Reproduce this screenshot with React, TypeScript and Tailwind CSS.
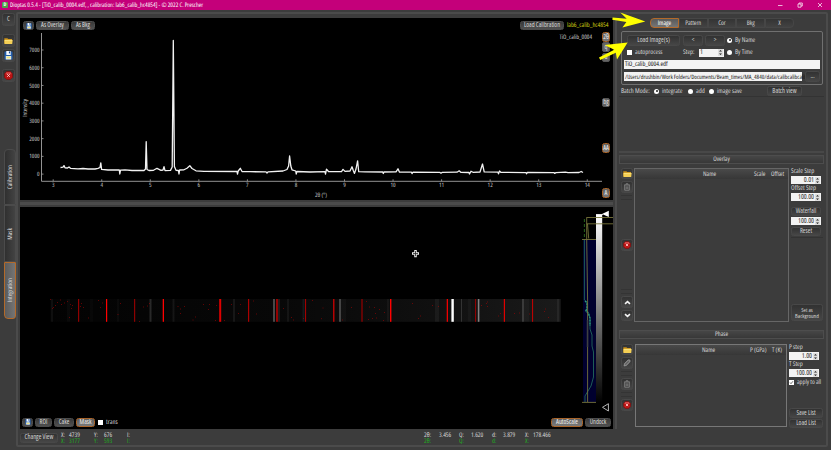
import type { ReactNode } from 'react';

const btn =
  'flex shrink-0 items-center justify-center whitespace-nowrap rounded-[2.5px] border border-[#484848] bg-linear-to-b from-[#323232] to-[#464646] text-[#d4d4d4]';
const plotBtn =
  'flex shrink-0 items-center justify-center whitespace-nowrap rounded-[2.5px] border border-[#4c4c4c] bg-linear-to-b from-[#383838] to-[#505050] text-[#dedede]';
const activeBtn =
  'flex shrink-0 items-center justify-center whitespace-nowrap rounded-[2.5px] border border-[#a8642a] bg-linear-to-b from-[#606060] to-[#7a7a7a] text-[#f0f0f0]';

function Button({ className = '', active = false, plot = false, children }: { className?: string; active?: boolean; plot?: boolean; children?: ReactNode }) {
  return <button className={`${active ? activeBtn : plot ? plotBtn : btn} ${className}`}>{children}</button>;
}

function SideButton({ className = '', children }: { className?: string; children?: ReactNode }) {
  return (
    <button className={`flex shrink-0 items-center justify-center rounded-[2px] border border-[#555] bg-[#646464] text-[#e2e2e2] ${className}`}>
      {children}
    </button>
  );
}

function Folder() {
  return (
    <svg width="9" height="8" viewBox="0 0 9 8" className="shrink-0">
      <path d="M0.3 1.2 H3.4 L4.2 2 H8 V6.8 H0.3Z" fill="#c98f16" />
      <path d="M0.3 2.9 H8.7 L8.2 6.9 H0.6Z" fill="#f4cf55" />
      <path d="M1 3.3 H8" stroke="#fff0a0" strokeWidth="0.6" />
    </svg>
  );
}

function Save({ size = 8 }: { size?: number }) {
  return (
    <svg width={size} height={size} viewBox="0 0 9 9" className="shrink-0">
      <rect x="0.5" y="0.5" width="8" height="8" rx="0.6" fill="#245fae" />
      <rect x="2.3" y="0" width="4.4" height="4" fill="#f4f8ff" />
      <rect x="4.9" y="0.4" width="1.2" height="2" fill="#1c4c92" />
      <rect x="1.8" y="5" width="5.4" height="3.5" fill="#e8eef4" />
      <rect x="2.4" y="5.6" width="4.2" height="1.8" fill="#eee47e" />
    </svg>
  );
}

function Stop({ size = 8 }: { size?: number }) {
  return (
    <svg width={size} height={size} viewBox="0 0 9 9" className="shrink-0">
      <path d="M2.7 0.5 H6.3 L8.5 2.7 V6.3 L6.3 8.5 H2.7 L0.5 6.3 V2.7Z" fill="#b81414" stroke="#7d0808" strokeWidth="0.6" />
      <path d="M2.4 1.2 H6.6 L7.6 3.2 H1.4Z" fill="#e86b6b" opacity="0.6" />
      <path d="M3.2 3.2 L5.8 5.8 M5.8 3.2 L3.2 5.8" stroke="#ffd8d8" strokeWidth="0.9" />
    </svg>
  );
}

function Trash() {
  return (
    <svg width="8" height="8" viewBox="0 0 8 8" className="shrink-0" fill="none" stroke="#8c8c8c" strokeWidth="0.8">
      <path d="M1 2 H7 M3 1.8 V0.8 H5 V1.8 M1.7 2.2 V7.2 H6.3 V2.2 M3.2 3.3 V6 M4.8 3.3 V6" />
    </svg>
  );
}

function Pencil() {
  return (
    <svg width="8" height="8" viewBox="0 0 8 8" className="shrink-0">
      <path d="M1 7 L1.6 4.4 L5 1 Q6.3 0.4 7 1.2 Q7.5 2 6.8 3 L3.4 6.4Z" fill="#777" stroke="#a4a4a4" strokeWidth="0.6" />
      <path d="M2.3 5.5 L5.8 2.1" stroke="#444" strokeWidth="0.6" />
    </svg>
  );
}

function Chevron({ up = false }: { up?: boolean }) {
  return (
    <svg width="7" height="5" viewBox="0 0 7 5" className="shrink-0">
      <path d={up ? 'M1 3.8 L3.5 1.6 L6 3.8' : 'M1 1.2 L3.5 3.4 L6 1.2'} fill="none" stroke="#f2f2f2" strokeWidth="1.6" />
    </svg>
  );
}

function Radio({ on = false }: { on?: boolean }) {
  return (
    <span className="flex size-[5px] shrink-0 items-center justify-center rounded-full bg-white">
      {on && <span className="size-[2px] rounded-full bg-[#222]" />}
    </span>
  );
}

function Spin({ value, className = '' }: { value: string; className?: string }) {
  return (
    <div className={`flex shrink-0 items-center bg-[#f3f3f3] text-[6.8px] text-[#222] ${className}`}>
      <span className="flex-1 px-px">{value}</span>
      <svg width="5" height="7" viewBox="0 0 5 7" className="mr-px shrink-0 bg-[#dedede]">
        <path d="M1 2.6 L2.5 0.9 L4 2.6Z M1 4.4 L2.5 6.1 L4 4.4Z" fill="#222" />
      </svg>
    </div>
  );
}

function Section({ title }: { title: string }) {
  return (
    <div className="flex h-[9px] items-center justify-center border border-[#4d4d4d] bg-linear-to-b from-[#464646] to-[#383838]">
      {title}
    </div>
  );
}

function Rules({ className = '' }: { className?: string }) {
  return <div className={`h-[5px] w-[11px] border-y border-[#343434] ${className}`} />;
}

const yTicks = [7000, 6000, 5000, 4000, 3000, 2000, 1000, 0];
const xTicks = [3, 4, 5, 6, 7, 8, 9, 10, 11, 12, 13, 14];

const trace =
  'M60.5 167.5 L63 167.2 L64 165.6 L65 167.8 L67.5 168 L69 167 L70.5 168.3 L78 168.8 L83 168.5 L88 169 L95 169 L98 168.4 L100 167.5 L100.8 162.8 L101.6 169.3 L108 170 L119.3 170 L119.8 174 L120.5 170.2 L125 169.8 L132 170.5 L144 170.5 L145.5 169 L146.2 141.7 L147 169.5 L149 170.5 L153.5 170.3 L157 168.3 L161 170.3 L163 170 L164 166.7 L165 170.6 L170.5 170.4 L172.2 167 L173.3 40.5 L174.4 166.5 L176 170.3 L178.4 170.5 L179 174 L179.6 170 L184 169.8 L187 168.2 L189.8 165.7 L192 168.5 L196 170.8 L204 171.4 L237 171.5 L237.5 174 L238.2 171 L240.3 168.3 L242 171.5 L250 171.7 L266 171.9 L267 173 L268 171.8 L283 171 L287 169.5 L288.6 166 L289.6 156 L290.8 166 L292 169.8 L295.7 171 L296.2 174 L296.9 171.5 L310 172 L325 171.7 L325.5 174 L326.5 169.2 L328.5 171.5 L341.5 171.6 L343 169.4 L345 171.4 L350 171 L352 166.8 L353.3 170.5 L354.5 173.4 L356 169 L357.6 160.8 L358.7 171.7 L365 171.8 L382.8 172 L383.3 173.5 L384 172 L396 171.9 L398 168.8 L399.5 172.2 L411.5 172.2 L412 173.6 L413 172.2 L440 172.4 L441 173.2 L442 172.4 L457 172.2 L459.2 170.8 L461 172.4 L469 172.5 L469.5 174 L471 171.2 L473 172.3 L480 172 L482.5 164 L484.2 171.8 L498 172.2 L498.5 173.8 L499.5 171 L501 172.4 L526 172.6 L526.6 173.8 L527.3 172.5 L554 172.6 L554.6 173.4 L556 172.6 L565.5 172.1 L568 172.7 L579 172.5 L581.2 171.5 L583 172.5';

function PatternPlot() {
  return (
    <svg width="580" height="168" viewBox="20 32 580 168" className="shrink-0 overflow-visible" fill="#c9c9c9" fontSize="6">
      <path d="M41.5 33 V181.3 H602" fill="none" stroke="#a4a4a4" strokeWidth="0.9" />
      {yTicks.map((v) => (
        <g key={v}>
          <path d={`M41.5 ${174.1 - v * 0.01773} h2`} stroke="#a4a4a4" strokeWidth="0.8" />
          <text x="39.5" y={176.2 - v * 0.01773} textAnchor="end">{v}</text>
        </g>
      ))}
      {xTicks.map((v) => (
        <g key={v}>
          <path d={`M${53.2 + (v - 3) * 48.55} 181.3 v-2`} stroke="#a4a4a4" strokeWidth="0.8" />
          <text x={53.2 + (v - 3) * 48.55} y="187" textAnchor="middle">{v}</text>
        </g>
      ))}
      <text x="321" y="197" textAnchor="middle">2θ (°)</text>
      <text transform="translate(27 108) rotate(-90)" textAnchor="middle">Intensity</text>
      <path d={trace} fill="none" stroke="#f2f2f2" strokeWidth="1.3" strokeLinejoin="round" />
      <text x="559.5" y="39.3" fontSize="6.1" textLength="32.5">TiO_calib_0004</text>
    </svg>
  );
}

const bands: [number, number, string, number][] = [
  [51, 2, '#aaa', 0.08], [67, 3, '#aaa', 0.04], [90, 3, '#aaa', 0.03], [117, 2, '#aaa', 0.04], [149.5, 2, '#aaa', 0.22], [172.5, 2, '#aaa', 0.1],
  [233, 2, '#aaa', 0.1], [273, 2, '#bbb', 0.36], [278, 2, '#aaa', 0.13], [287, 2, '#aaa', 0.08], [302.5, 2, '#67809a', 0.13], [339, 2, '#ccc', 0.3], [341, 5, '#aaa', 0.04],
  [387, 2, '#aaa', 0.06], [435, 4, '#aaa', 0.08], [451.4, 2.4, '#fff', 1], [461, 1, '#aaa', 0.22], [468, 3, '#aaa', 0.04], [477.8, 1.6, '#ddd', 0.55], [522, 2, '#bbb', 0.22], [524, 5, '#aaa', 0.04],
  [557, 2, '#bbb', 0.08], [78, 1.2, '#b30000', 0.8], [106, 1.2, '#ff0000', 1], [134, 1.2, '#b00000', 0.8], [162.7, 1.3, '#ff0000', 1],
  [219.2, 2, '#dd0000', 1], [248, 1.2, '#bd0000', 0.9], [276, 2, '#ad0000', 0.85], [305, 1.1, '#b40000', 0.9], [333.2, 1.2, '#e00000', 1],
  [361.2, 1.6, '#900000', 0.8], [390, 1.4, '#ff0000', 1], [446.7, 1.3, '#f00000', 1], [475, 1.1, '#9c0000', 0.9], [503.8, 1.2, '#e00000', 1], [532, 1.1, '#cc0000', 0.9],
];

const specks = [
  [50, 299], [53, 307], [55, 305], [57, 302], [60, 299.5], [61, 304], [64, 302.5], [52, 308], [67, 301], [72, 305], [71, 308], [70, 304], [69, 317], [81, 303], [80, 306], [83, 307], [88, 317.5], [98, 300], [100, 307], [102, 302.5],
  [120, 303], [117.5, 314], [139, 321], [143, 306.5], [147, 305.5], [149, 303], [177.5, 306], [180, 308.5], [184, 306], [180, 313], [192.5, 319.5], [195, 316.5], [209, 304], [203, 304], [208, 309], [216, 305], [215, 320], [224, 320],
  [231, 304], [238, 313], [240, 304], [253, 300.5], [256, 313.5], [283, 308], [291, 317], [293, 319.5], [303, 318], [312, 300], [321, 318.2], [322.5, 307.5], [351, 307], [342, 319.5], [366, 301], [369, 306.5], [374, 307], [375, 313],
  [368, 319], [372, 318], [376, 317.5], [379, 309], [384, 312], [383, 320], [412, 303], [418, 318], [420, 315.5], [432, 305], [438, 306], [481, 305], [486, 303], [487, 306], [487, 301.5], [498, 315.5], [500, 313], [514, 313], [519, 312.5], [529, 313.5], [545, 308.5], [544, 311], [548, 317],
];

function DetectorImage() {
  return (
    <svg width="593" height="207" viewBox="20 207 593 207" className="block shrink-0">
      <defs>
        <linearGradient id="strip">
          <stop offset="0" stopColor="#030303" />
          <stop offset="0.45" stopColor="#080808" />
          <stop offset="0.75" stopColor="#101010" />
          <stop offset="1" stopColor="#1a1a1a" />
        </linearGradient>
        <linearGradient id="levels" x1="0" x2="0" y1="0" y2="1">
          <stop offset="0" stopColor="#fff" />
          <stop offset="1" stopColor="#000" />
        </linearGradient>
      </defs>
      <rect x="50" y="299" width="510.7" height="22.8" fill="url(#strip)" />
      {bands.map(([x, w, c, o], i) => <rect key={i} x={x} y="299" width={w} height="22.8" fill={c} opacity={o} />)}
      {specks.map(([x, y], i) => <rect key={i} x={x} y={y} width="1" height="1" fill="#c00000" opacity="0.5" />)}
      <path d="M415.5 250 V257.2 M412 253.6 H419" stroke="#eee" strokeWidth="2.5" />
      <path d="M415.5 251 V256.2 M413 253.6 H418" stroke="#333" strokeWidth="0.9" />
      <rect x="583" y="239" width="13" height="163.5" fill="#00002f" />
      <rect x="596" y="214.5" width="6.2" height="188.5" fill="url(#levels)" />
      <path d="M596 214.5 H603" stroke="#fff" strokeWidth="0.8" />
      <path d="M584.4 239 V300 L587 302 V308 L585.5 311 L588 313 L590 318 V329 L592 335 V346 L593.5 352 V377 L591 386 L588 391 L585 396 V402" fill="none" stroke="#20685c" strokeWidth="0.9" />
      <path d="M585 301 L587 303 V308 L586 311 L588.5 313 L590 318 V326" fill="none" stroke="#2c9a80" strokeWidth="1.3" strokeDasharray="2 1" />
      <path d="M584.4 219 V239" stroke="#2f7020" strokeWidth="0.9" strokeDasharray="3 2" />
      <path d="M586.7 217.5 V239 L587.6 300 V402 M586.5 217.5 H613 M586.5 223.8 H613 M587.5 224 L588.7 238.5 M582 239.5 H596 M582 402.4 H596" fill="none" stroke="#77743a" strokeWidth="0.9" />
      <path d="M587.5 320 V347" stroke="#3f4040" strokeWidth="1.5" />
      <path d="M602 214 L608.8 210.8 V217Z" fill="#fff" />
      <path d="M602.5 407.3 L608.4 403.7 V411Z" fill="none" stroke="#c8c8c8" strokeWidth="0.9" />
    </svg>
  );
}

function Sidebar() {
  return (
    <aside className="flex w-4 shrink-0 flex-col pt-[3px] pl-[2px]">
      <Button className="h-[13px] w-[13px]">C</Button>
      <Button className="mt-2 h-[13px] w-[13px]"><Folder /></Button>
      <Button className="mt-[2px] h-[13px] w-[13px]"><Save size={9} /></Button>
      <Button className="mt-[7px] h-[13px] w-[13px]"><Stop size={9} /></Button>
      <nav className="mt-[67px] ml-[2px] flex flex-col">
        {['Calibration', 'Mask', 'Integration'].map((t, i) => (
          <div
            key={t}
            className={`flex w-3 items-center justify-center border ${i === 0 ? 'h-14' : 'h-[57px]'} ${i === 2 ? 'rounded-bl-[4px] rounded-br-[3px] border-[#b36a2a] bg-linear-to-r from-[#5c5c5c] to-[#747474]' : 'border-[#4b4b4b] bg-linear-to-r from-[#303030] to-[#434343]'} ${i === 0 ? 'rounded-t-[4px]' : ''}`}
          >
            <span className="rotate-180 text-[6.4px] [writing-mode:vertical-rl]">{t}</span>
          </div>
        ))}
      </nav>
    </aside>
  );
}

function PatternPanel() {
  return (
    <section className="flex h-[182px] flex-col bg-black">
      <div className="flex h-[14px] items-center pt-px pr-[3px] pl-[3px]">
        <Button plot className="h-[9px] w-[11px]"><Save size={6} /></Button>
        <Button plot className="ml-[2px] h-[9px] w-[33px]">As Overlay</Button>
        <Button plot className="ml-[2px] h-[9px] w-6">As Bkg</Button>
        <Button plot className="ml-auto h-[9px] w-[44px]">Load Calibration</Button>
        <span className="ml-[3px] w-[43px] text-[6.4px] whitespace-nowrap text-[#d2d213]">lab6_calib_hc4854</span>
      </div>
      <div className="flex">
        <PatternPlot />
        <div className="ml-[2px] flex w-[8px] flex-col">
          <Button active className="h-[10px]">2θ</Button>
          <SideButton className="h-[10px]">q</SideButton>
          <SideButton className="mt-px h-[9px]">d</SideButton>
          <SideButton className="mt-[36px] h-[9px]">bg</SideButton>
          <Button active className="mt-[36px] h-[10px]">AA</Button>
          <Button active className="mt-[35px] h-[10px]">A</Button>
        </div>
      </div>
    </section>
  );
}

function ImagePanel() {
  return (
    <section className="flex h-[222px] flex-col bg-black">
      <DetectorImage />
      <div className="flex h-[15px] items-start px-[2px] pt-[4px]">
        <Button plot className="h-[9px] w-[11px]"><Save size={6} /></Button>
        <Button plot className="ml-[2px] h-[9px] w-[17px]">ROI</Button>
        <Button plot className="ml-[2px] h-[9px] w-5">Cake</Button>
        <Button active className="ml-[2px] h-[9px] w-[19px]">Mask</Button>
        <span className="mt-[2px] ml-[3px] size-[5px] bg-white" />
        <span className="mt-[1px] ml-[3px] text-[6.7px]">trans</span>
        <Button active className="ml-auto h-[9px] w-8 text-[6.5px]">AutoScale</Button>
        <Button plot className="ml-[2px] h-[9px] w-[26px]">Undock</Button>
      </div>
    </section>
  );
}

function Readout({ cells, className = '' }: { cells: string[]; className?: string }) {
  return (
    <div className={`grid h-[6px] grid-cols-[8px_25px_10px_23px_297px_15px_20px_12px_21px_11px_22px_8px_30px] items-center text-[6.4px] leading-[6px] whitespace-nowrap ${className}`}>
      {cells.map((c, i) => <span key={i}>{c}</span>)}
    </div>
  );
}

function StatusBar() {
  return (
    <footer className="flex h-[18px] items-start">
      <Button className="mt-1 h-[10px] w-[38px] text-[6.6px]">Change View</Button>
      <div className="mt-[3px] ml-[3px] flex flex-col">
        <Readout cells={['X:', '4739', 'Y:', '676', 'I:', '2θ:', '3.456', 'Q:', '1.620', 'd:', '3.879', 'X:', '178.466']} />
        <Readout className="text-[#1fb01f]" cells={['X:', '3177', 'Y:', '593', 'I:', '2θ:', '', 'Q:', '', 'd:', '', 'X:', '']} />
      </div>
    </footer>
  );
}

function ImageControls() {
  return (
    <div className="mx-[2px] h-[128px]">
      <div className="ml-[31px] flex h-[10px] w-[144px]">
        {['Image', 'Pattern', 'Cor', 'Bkg', 'X'].map((t, i) => (
          <div
            key={t}
            className={`flex flex-1 items-center justify-center border ${i === 0 ? 'rounded-l-[4px] border-[#b36a2a] bg-linear-to-b from-[#5a5a5a] to-[#757575] text-white' : 'border-[#464646] bg-linear-to-b from-[#343434] to-[#424242]'} ${i === 4 ? 'rounded-r-[4px]' : ''}`}
          >
            {t}
          </div>
        ))}
      </div>
      <div className="mt-[3px] ml-[2px] h-[54px] w-[202px] rounded-[2px] border border-[#707070] px-[2px] pt-[3px]">
        <div className="flex h-[11px] items-center">
          <Button className="ml-[3px] h-[11px] w-[53px] text-[6.7px]">Load Image(s)</Button>
          <Button className="ml-[3px] h-[11px] w-5">&lt;</Button>
          <Button className="ml-[2px] h-[11px] w-5">&gt;</Button>
          <span className="-mt-px ml-[2px] flex items-center gap-[3px] text-[6.6px]"><Radio on />By Name</span>
        </div>
        <div className="mt-[2px] flex h-[9px] items-center text-[6.6px]">
          <span className="ml-[3px] size-[5px] bg-white" />
          <span className="ml-[3px] w-[48px]">autoprocess</span>
          <span className="w-4">Step:</span>
          <Spin value="1" className="h-2 w-[25px]" />
          <span className="ml-[3px] flex items-center gap-[3px]"><Radio />By Time</span>
        </div>
        <div className="mt-[3px] flex h-[9px] items-center bg-[#f3f3f3] pl-px text-[#111]">TiO_calib_0004.edf</div>
        <div className="mt-[2px] flex items-center gap-[3px]">
          <div className="flex h-[9px] w-[178px] items-center bg-[#f3f3f3] pl-px text-[6px] whitespace-nowrap text-[#111] [font-stretch:78%]">
            /Users/drushbin/Work Folders/Documents/Beam_times/MA_4840/data/calibcalibcalib
          </div>
          <Button className="h-[11px] w-[15px]">...</Button>
        </div>
      </div>
      <div className="mt-px flex h-[11px] items-center border-b border-[#333] pl-[2px] text-[6.6px] whitespace-nowrap">
        <span className="w-[33px]">Batch Mode:</span>
        <Radio on /><span className="ml-[3px] w-[26px]">integrate</span>
        <Radio /><span className="ml-[3px] w-[13px]">add</span>
        <Radio /><span className="ml-[3px] w-[50px]">image save</span>
        <Button className="h-[10px] w-[35px] text-[6.6px]">Batch view</Button>
      </div>
    </div>
  );
}

function OverlaySection() {
  return (
    <div className="mx-[2px] flex h-[177px] flex-col border-t-2 border-[#484848] pt-[2px]">
      <Section title="Overlay" />
      <div className="flex pt-1">
        <div className="flex w-[15px] flex-col items-start pl-[2px]">
          <Button className="h-[11px] w-[12px]"><Folder /></Button>
          <Button className="mt-[2px] h-[12px] w-[12px]"><Trash /></Button>
          <Rules className="mt-[2px]" />
          <Button className="mt-[39px] h-[12px] w-[12px]"><Stop /></Button>
          <Rules className="mt-[38px]" />
          <Button className="mt-[2px] h-[12px] w-[12px]"><Chevron up /></Button>
          <Button className="mt-[2px] h-[11px] w-[12px]"><Chevron /></Button>
        </div>
        <div className="h-[154px] w-[155px] border border-[#666]">
          <div className="grid h-[10px] grid-cols-[119px_17px_17px] items-center bg-linear-to-b from-[#494949] to-[#373737]">
            <span className="pl-[68px]">Name</span><span>Scale</span><span>Offset</span>
          </div>
        </div>
        <div className="ml-[2px] flex w-8 flex-col whitespace-nowrap">
          <span className="h-[8px] text-[6.7px]">Scale Step</span>
          <Spin value="0.01" className="h-2 w-[30px] text-right" />
          <span className="mt-[1px] h-[8px] text-[6.7px]">Offset Step</span>
          <Spin value="100.00" className="h-2 w-[30px] text-right" />
          <Button className="mt-[6px] h-[9px] w-[30px] text-[6.5px]">Waterfall</Button>
          <Spin value="100.00" className="mt-px h-2 w-[30px] text-right" />
          <Button className="mt-[2px] h-[9px] w-[30px] text-[6.5px]">Reset</Button>
          <div className="mt-px border-b border-[#333]" />
          <Button className="mt-[66px] h-[17px] w-8 text-center text-[5.8px] leading-[6px]">Set as<br />Background</Button>
        </div>
      </div>
    </div>
  );
}

function PhaseSection() {
  return (
    <div className="mx-[2px] flex flex-col pt-[2px]">
      <Section title="Phase" />
      <div className="flex pt-[5px]">
        <div className="flex w-4 flex-col items-start pl-[2px]">
          <Button className="h-[11px] w-[12px]"><Folder /></Button>
          <Button className="mt-[2px] h-[12px] w-[12px]"><Pencil /></Button>
          <Rules className="mt-[2px]" />
          <Button className="mt-[2px] h-[12px] w-[12px]"><Trash /></Button>
          <Rules className="mt-[2px]" />
          <Button className="mt-[2px] h-[12px] w-[12px]"><Stop /></Button>
        </div>
        <div className="h-[83px] w-[152px] border border-[#777]">
          <div className="grid h-[10px] grid-cols-[114px_22px_14px] items-center bg-linear-to-b from-[#494949] to-[#373737] whitespace-nowrap">
            <span className="pl-[66px]">Name</span><span>P (GPa)</span><span>T (K)</span>
          </div>
        </div>
        <div className="ml-[2px] flex w-[34px] flex-col whitespace-nowrap">
          <span className="h-[8px] text-[6.6px]">P step</span>
          <Spin value="1.00" className="h-2 w-[30px] text-right" />
          <span className="mt-[1px] h-[8px] text-[6.6px]">T Step</span>
          <Spin value="100.00" className="h-2 w-[30px] text-right" />
          <div className="mt-[2px] flex h-[7px] items-center gap-[3px]">
            <svg width="5" height="5" viewBox="0 0 5 5" className="shrink-0"><rect width="5" height="5" fill="#fff" /><path d="M1 2.5 L2 3.7 L4 1.2" fill="none" stroke="#333" strokeWidth="0.7" /></svg>
            <span>apply to all</span>
          </div>
          <Button className="mt-[22px] h-[10px] w-[34px] text-[6.5px]">Save List</Button>
          <Button className="mt-px h-[9px] w-[34px] text-[6.5px]">Load List</Button>
        </div>
      </div>
    </div>
  );
}

function Annotations() {
  return (
    <svg width="831" height="450" viewBox="0 0 831 450" className="pointer-events-none absolute inset-0 z-20" fill="#ffff00">
      <path d="M645.3 21.5 L622.4 27.6 L626.4 22.1 L612.3 19.8 L612.6 17.4 L626.7 18.7 L620.3 12.5Z" />
      <path d="M627.6 42.6 L617 59.4 L615.8 52.7 L600.3 60 L599 57.4 L614.3 49.7 L604.7 45Z" />
    </svg>
  );
}

export default function App() {
  return (
    <div className="relative flex h-[450px] w-[831px] flex-col overflow-hidden bg-[#3c3c3c] font-['Open_Sans',sans-serif] text-[6.4px] leading-none text-[#d8d8d8] [font-stretch:84%] [text-rendering:geometricPrecision]">
      <header className="flex h-[10px] shrink-0 items-center bg-[#c4007a] pr-2 pl-[2px] text-white">
        <span className="flex size-[6px] items-center justify-center rounded-[1px] bg-[#4da44a] text-[5px] font-bold">D</span>
        <span className="ml-[2px] text-[6.2px] whitespace-nowrap [font-stretch:80%]">Dioptas 0.5.4 - [TiO_calib_0004.edf, , calibration: lab6_calib_hc4854] - © 2022 C. Prescher</span>
        <svg width="46" height="6" viewBox="0 0 46 6" className="ml-auto" fill="none" stroke="#fff" strokeWidth="0.7">
          <path d="M1 3.5 H5.5 M21 2 H24 V5.2 H21Z M22 2 V1 H25.3 V4 H24 M41 1 L45 5 M45 1 L41 5" />
        </svg>
      </header>
      <main className="flex min-h-0 flex-1">
        <Sidebar />
        <div className="mt-[2px] mb-[3px] flex w-[812px] rounded-[2px] border-2 border-[#4b4b4b] pt-1 pl-[2px]">
          <div className="flex w-[593px] shrink-0 flex-col">
            <PatternPanel />
            <div className="my-[2px] h-[3px] bg-[#4b4b4b]" />
            <ImagePanel />
            <StatusBar />
          </div>
          <div className="mr-[2px] ml-[2px] h-[411px] w-[2px] shrink-0 bg-[#4b4b4b]" />
          <div className="-ml-[2px] flex w-[210px] flex-col">
            <ImageControls />
            <div className="h-[5px]" />
            <OverlaySection />
            <PhaseSection />
          </div>
        </div>
      </main>
      <Annotations />
    </div>
  );
}
